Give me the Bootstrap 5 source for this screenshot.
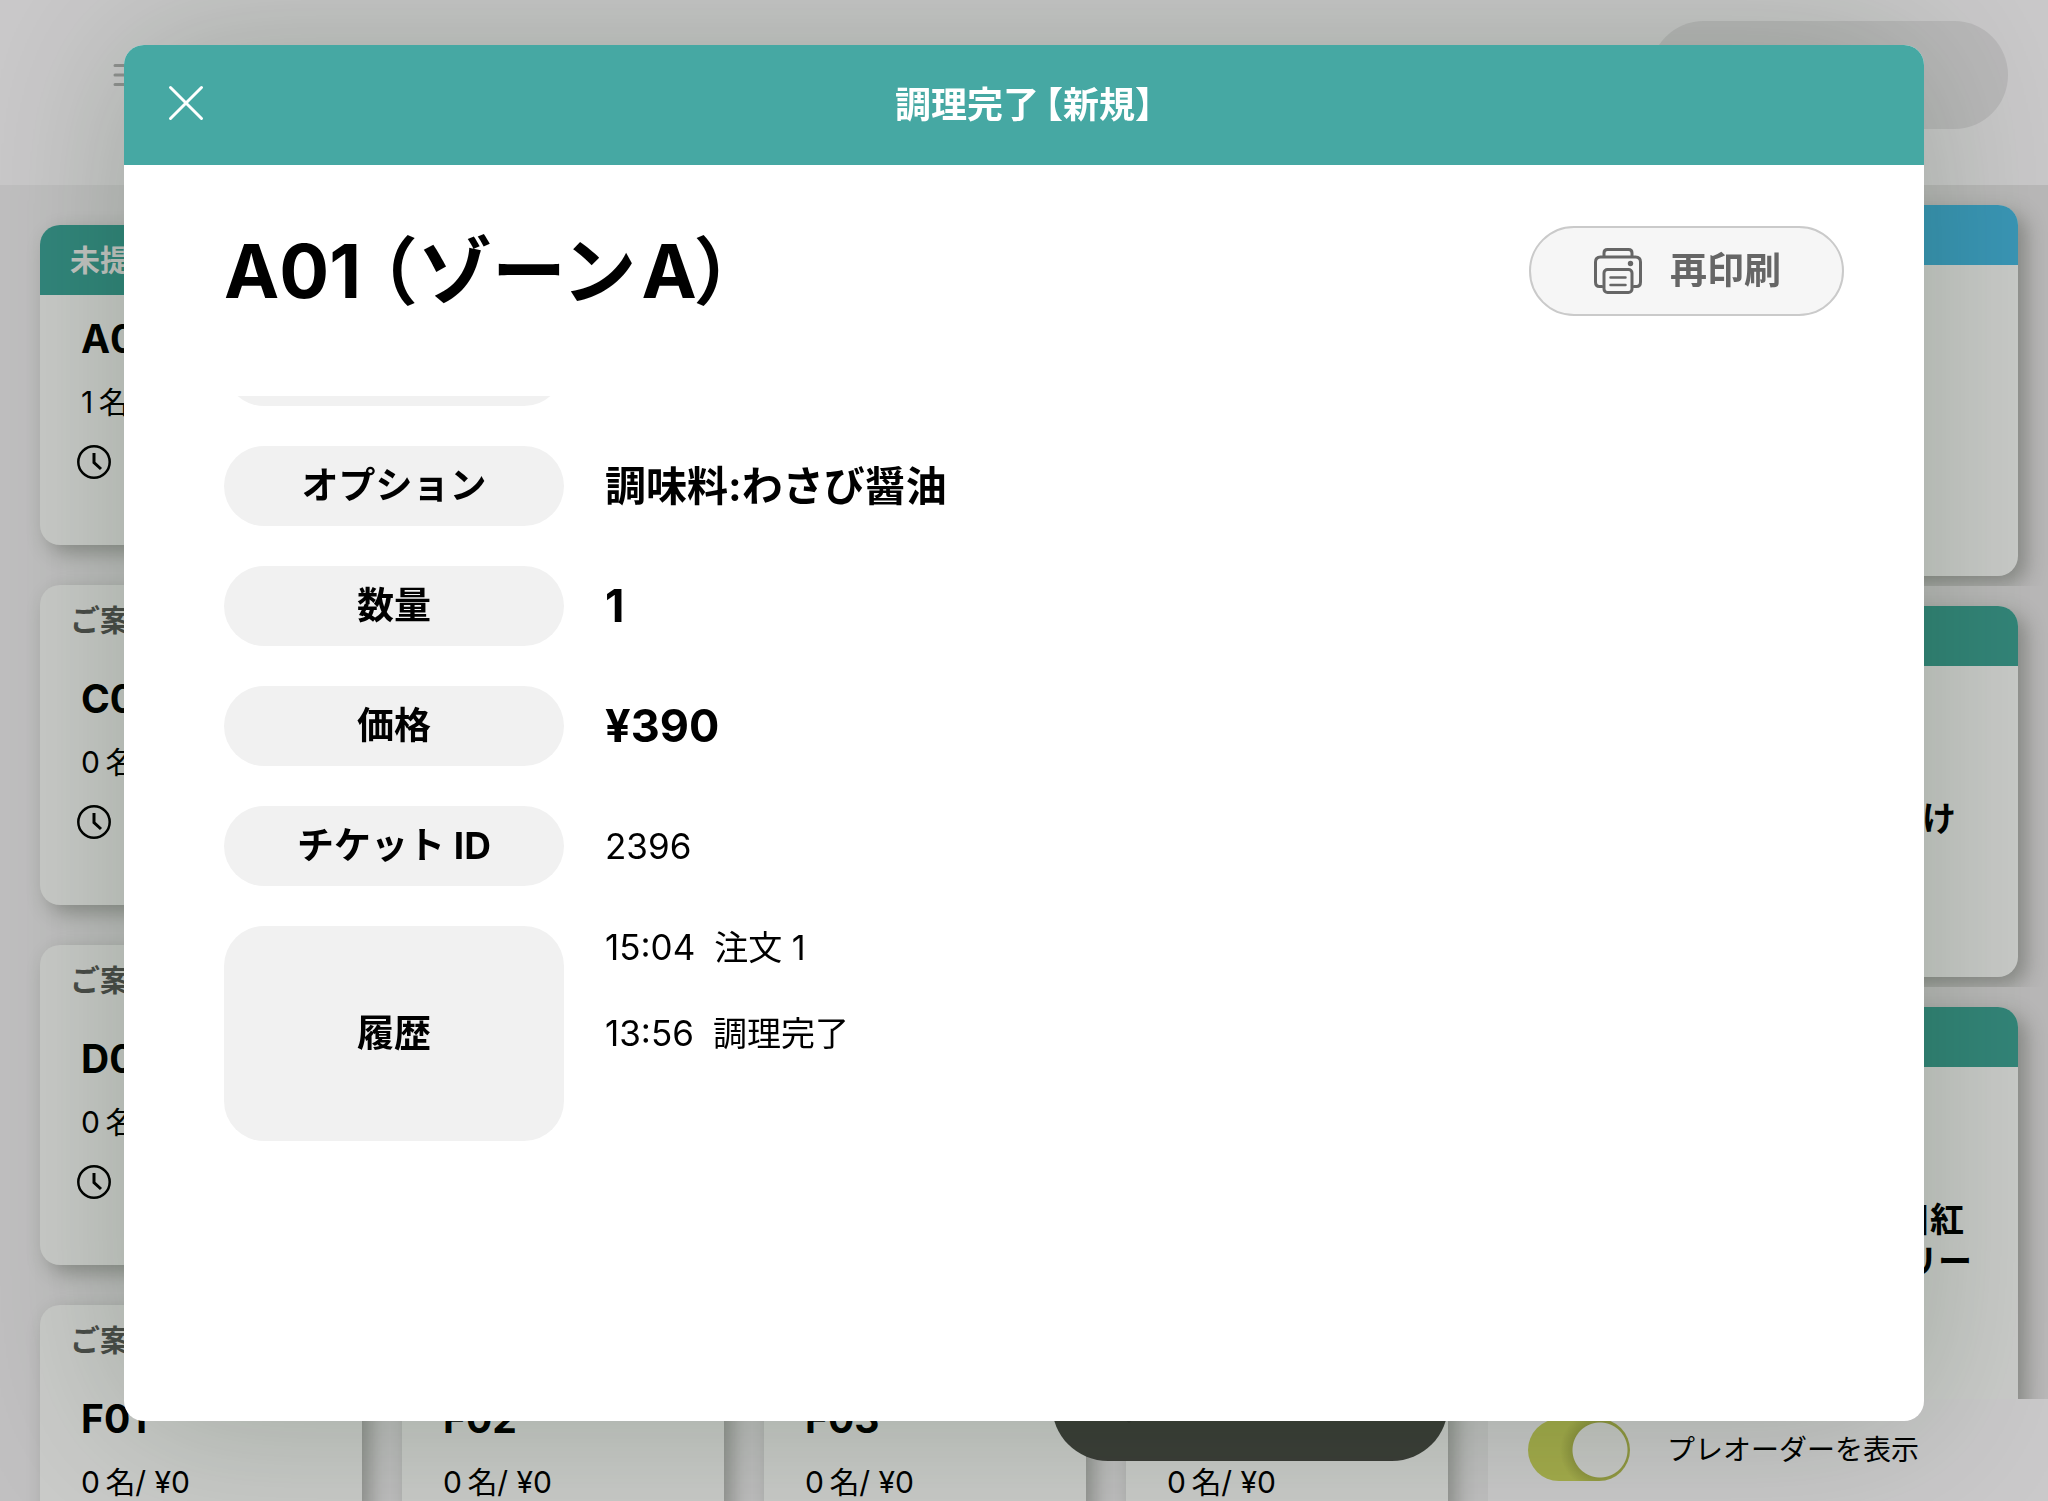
<!DOCTYPE html>
<html lang="ja">
<head>
<meta charset="utf-8">
<meta name="viewport" content="width=device-width, initial-scale=1">
<title>調理完了【新規】</title>
<link href="https://cdn.jsdelivr.net/npm/bootstrap@5.3.0/dist/css/bootstrap.min.css" rel="stylesheet">
<style>
body { font-family: Inter, "Noto Sans CJK JP", sans-serif; background: #c1c0c1; color: #000; }
.app { height: 100vh; overflow: hidden; }
.app-top { height: 185px; background: #cac9ca; padding: 0 40px 36px 113px; }
.menu-btn { color: #919291; }
.top-pill { width: 358px; height: 108px; border-radius: 54px; background: #bab9ba; }
.main-row { min-height: 0; }
.tables-pane { min-width: 0; }
.tables-grid { display: grid; grid-template-columns: repeat(4, 1fr); gap: 40px; padding: 40px 40px 0; }
.tile { height: 320px; border-radius: 20px; background: #cacbc9; box-shadow: 8px 8px 20px rgba(40, 48, 36, .34); overflow: hidden; }
.tile-head { height: 70px; padding: 0 30px; font-size: 30px; line-height: 70px; font-weight: 700; color: #4a4c49; white-space: nowrap; }
.tile-head.waiting { background: #32867c; color: #c4c5c3; }
.tile-body { padding: 20px 0 0 41px; }
.tile-name { font-size: 39px; line-height: 48px; font-weight: 700; }
.tile-sub { font-size: 30px; line-height: 40px; margin-top: 19px; }
.tile-body svg { display: block; margin: 22px 0 0 -5px; }
.order-pill { position: absolute; right: 40px; bottom: 40px; width: 396px; height: 120px; border-radius: 56px; background: #3c3e39; color: #343632; border: 0; }
.side-pane { width: 560px; background: #bab9b9; }
.side-list { overflow: hidden; min-height: 0; }
.side-cell { flex: none; overflow: hidden; padding: 20px 30px 10px; }
.ticket { height: 371px; border-radius: 20px; overflow: hidden; background: #cacbc9; box-shadow: 8px 8px 20px rgba(40, 48, 36, .34); }
.ticket.tall { height: 450px; }
.ticket-head { height: 60px; background: #338579; }
.ticket-head.blue { background: #3a96b6; }
.ticket-name { padding: 132px 46px 0 0; font-size: 34px; line-height: 42px; font-weight: 700; text-align: right; }
.side-foot { height: 102px; background: #cac9ca; padding: 0 40px; }
.side-foot .form-check-input { width: 102px; height: 62px; margin: 0; border: 0; border-radius: 31px; background-color: #a5ac4c; box-shadow: none;
  background-image: radial-gradient(circle at 72px 31px, #c8c8c6 27px, rgba(60, 64, 20, .2) 28px, rgba(60, 64, 20, 0) 40px); background-size: 100% 100%; background-position: center; }
.side-foot label { font-size: 28px; line-height: 40px; margin-left: 37px; }

.ticket-modal { --bs-modal-width: calc(100vw - 248px); --bs-modal-margin: 0; }
.ticket-modal .modal-dialog { margin: 45px auto 80px; height: calc(100vh - 125px); }
.ticket-modal .modal-content { height: 100%; border: 0; border-radius: 20px; overflow: hidden; color: #000; box-shadow: 0 0 160px rgba(0, 40, 0, .22); }
.ticket-modal .modal-header { flex: none; height: 120px; border: 0; border-radius: 0; padding: 0 40px; background: #46a8a3; color: #fff; display: grid; grid-template-columns: 44px 1fr 44px; }
.ticket-modal .modal-title { font-size: 36px; line-height: 50px; font-weight: 700; text-align: center; }
.half-width { font-feature-settings: "halt"; }
.tight { font-feature-settings: "palt"; }
.gap-before { margin-left: 6px; }
.ticket-title .gap-before { margin-left: 20px; }
.ticket-modal .modal-body { padding: 61px 80px 60px 100px; overflow: hidden; }
.ticket-title { font-size: 74px; line-height: 90px; font-weight: 700; }
.ticket-title .latin { margin-left: 5px; }
.print-btn { width: 315px; height: 90px; border: 2px solid #cacaca; border-radius: 45px; background: #f6f6f6; color: #666; font-size: 37px; font-weight: 700; padding: 0 0 0 2px; gap: 28px; }
.detail-scroll { margin-top: 80px; overflow: hidden; min-height: 0; flex: 1; }
.detail-list { display: flex; flex-direction: column; gap: 40px; margin: -70px 0 0; }
.detail-item { display: flex; gap: 41px; min-height: 80px; flex: none; }
.detail-item dt { width: 340px; border-radius: 40px; background: #f1f1f1; font-size: 37px; font-weight: 700; display: flex; align-items: center; justify-content: center; white-space: pre; }
.detail-item dd { margin: 0; font-size: 41px; line-height: 80px; font-weight: 700; }
.detail-item dd.figure-text { font-size: 45px; }
.detail-item dd.plain { font-size: 35px; font-weight: 400; }
.history { line-height: 43px; }
.history li { margin-bottom: 43px; display: flex; gap: 19px; }
.history li:last-child { margin-bottom: 86px; }
.history .event { font-size: 34px; }
</style>
<script src="https://cdn.jsdelivr.net/npm/bootstrap@5.3.0/dist/js/bootstrap.bundle.min.js"></script>
</head>
<body>
<div class="app d-flex flex-column">
  <header class="app-top d-flex justify-content-between align-items-center flex-shrink-0">
    <button type="button" class="menu-btn btn p-0 border-0" aria-label="メニュー">
      <svg width="30" height="24" viewBox="0 0 30 24" fill="none" stroke="currentColor" stroke-width="3" stroke-linecap="round"><path d="M2 2.500h26M2 12h26M2 21.500h26"/></svg>
    </button>
    <div class="top-pill"></div>
  </header>
  <div class="main-row d-flex flex-grow-1">
    <main class="tables-pane flex-grow-1 position-relative overflow-hidden">
      <div class="tables-grid" id="tables"></div>
      <button type="button" class="order-pill d-flex align-items-center" aria-label="注文">
        <svg class="ms-5" width="46" height="46" viewBox="0 0 46 46" fill="none" stroke="currentColor" stroke-width="3"><path d="M2 4q11-4 21 4 10-8 21-4v36q-11-5-21 3-10-8-21-3zM23 8v35"/></svg>
      </button>
    </main>
    <aside class="side-pane d-flex flex-column flex-shrink-0">
      <div class="side-list d-flex flex-column flex-grow-1">
        <div class="side-cell"><div class="ticket"><div class="ticket-head blue"></div></div></div>
        <div class="side-cell"><div class="ticket"><div class="ticket-head"></div><div class="ticket-name">け&nbsp;&nbsp;</div></div></div>
        <div class="side-cell"><div class="ticket tall"><div class="ticket-head"></div><div class="ticket-name">川紅&nbsp;<br>リー</div></div></div>
      </div>
      <div class="side-foot d-flex align-items-center flex-shrink-0">
        <input class="form-check-input" type="checkbox" role="switch" id="preorder">
        <label for="preorder">プレオーダーを表示</label>
      </div>
    </aside>
  </div>
</div>

<div class="ticket-modal modal d-block" tabindex="-1" role="dialog" aria-labelledby="modalTitle">
  <div class="modal-dialog">
    <div class="modal-content">
      <div class="modal-header">
        <button type="button" class="btn p-0 border-0 text-white d-flex" aria-label="閉じる">
          <svg width="44" height="44" viewBox="0 0 44 44" fill="none" stroke="currentColor" stroke-width="3" stroke-linecap="round"><path d="M6.500 4.500l31 31M37.500 4.500l-31 31"/></svg>
        </button>
        <h1 class="modal-title" id="modalTitle">調理完了<span class="half-width gap-before">【</span>新規<span class="half-width">】</span></h1>
      </div>
      <div class="modal-body d-flex flex-column">
        <div class="d-flex justify-content-between align-items-center flex-shrink-0">
          <h2 class="ticket-title m-0">A01<span class="half-width gap-before">（</span>ゾーン<span class="latin">A</span><span class="tight">）</span></h2>
          <button type="button" class="print-btn btn d-flex align-items-center justify-content-center">
            <svg width="48" height="46" viewBox="0 0 48 46" fill="none" stroke="currentColor" stroke-width="3" stroke-linecap="round" stroke-linejoin="round">
              <path d="M10 8V5q0-3.500 3.500-3.500h21Q38 1.500 38 5v3"/>
              <path d="M8 38.500H5.500Q1.500 38.500 1.500 34V14q0-5 5-5h35q5 0 5 5v20q0 4.500-4 4.500H40"/>
              <rect x="10" y="21.500" width="28" height="23" rx="3.500"/>
              <path d="M16.500 29.500h15M16.500 37h15" stroke-width="2.500"/>
              <circle cx="36.500" cy="15.500" r="2.700" fill="currentColor" stroke="none"/>
            </svg>
            <span>再印刷</span>
          </button>
        </div>
        <div class="detail-scroll">
          <dl class="detail-list">
            <div class="detail-item"><dt></dt><dd></dd></div>
            <div class="detail-item"><dt>オプション</dt><dd>調味料:わさび醤油</dd></div>
            <div class="detail-item"><dt>数量</dt><dd class="figure-text">1</dd></div>
            <div class="detail-item"><dt>価格</dt><dd class="figure-text">¥390</dd></div>
            <div class="detail-item"><dt>チケット ID</dt><dd class="plain">2396</dd></div>
            <div class="detail-item"><dt>履歴</dt><dd class="plain">
              <ul class="history list-unstyled m-0">
                <li><span>15:04</span><span class="event">注文 1</span></li>
                <li><span>13:56</span><span class="event">調理完了</span></li>
              </ul></dd></div>
          </dl>
        </div>
      </div>
    </div>
  </div>
</div>

<script>
const tables = [
  { name: "A01", guests: 1, state: "未提供", waiting: true }, null, null, null,
  { name: "C01", guests: 0, state: "ご案内" }, null, null, null,
  { name: "D01", guests: 0, state: "ご案内" }, null, null, null,
  { name: "F01", guests: 0, state: "ご案内" },
  { name: "F02", guests: 0, state: "" },
  { name: "F03", guests: 0, state: "" },
  { name: "F04", guests: 0, state: "" }
];
const grid = document.getElementById("tables");
tables.forEach(t => {
  const tile = document.createElement("section");
  tile.className = "tile";
  if (t) tile.innerHTML = `
      <div class="tile-head ${t.waiting ? "waiting" : ""}">${t.state}</div>
      <div class="tile-body">
        <div class="tile-name">${t.name}</div>
        <div class="tile-sub">${t.guests}&#8202;&#8202;名/ ¥0</div>
        <svg width="36" height="36" viewBox="0 0 36 36" fill="none" stroke="#000" stroke-width="2.500"><circle cx="18" cy="18" r="15.700"/><path d="M18 9v9.500l7 6.500" stroke-width="3"/></svg>
      </div>`;
  grid.append(tile);
});
</script>
</body>
</html>
